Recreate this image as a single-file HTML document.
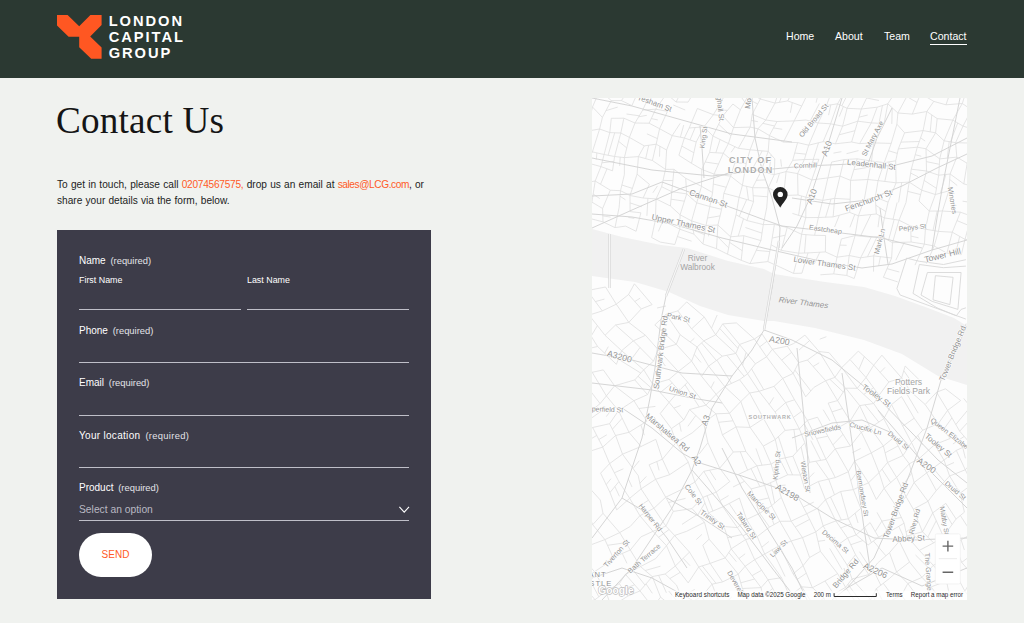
<!DOCTYPE html>
<html lang="en">
<head>
<meta charset="utf-8">
<title>Contact Us — London Capital Group</title>
<style>
*{box-sizing:border-box;margin:0;padding:0}
html,body{width:1024px;height:623px;overflow:hidden}
body{background:#f0f2ef;font-family:"Liberation Sans",sans-serif;color:#1f1f1f;position:relative}
.hdr{position:absolute;left:0;top:0;width:1024px;height:77.8px;background:#2b3932}
.logo{position:absolute;left:56px;top:14px;width:46px;height:46px}
.brand{position:absolute;left:108.7px;top:14px;color:#fff;font-weight:700;font-size:14.7px;line-height:15.9px;letter-spacing:1.95px;white-space:nowrap}
.nav a{position:absolute;top:29px;color:#fff;font-size:10.6px;line-height:14px;text-decoration:none;white-space:nowrap}
.nav a.on{border-bottom:1px solid #fff;padding-bottom:1px}
h1{position:absolute;left:56px;top:98px;font-family:"Liberation Serif",serif;font-weight:400;font-size:37.2px;line-height:46px;color:#151515;letter-spacing:0.2px;white-space:nowrap}
.intro{position:absolute;left:57px;top:177px;width:400px;font-size:10.15px;line-height:15.5px;color:#222;white-space:nowrap;word-spacing:0.42px}
.intro a{color:#ff5a26;text-decoration:none}
.form{position:absolute;left:57px;top:230px;width:374.3px;height:369px;background:#3d3c49;color:#fff}
.form .l{position:absolute;left:22px;font-size:10px;line-height:14px;white-space:nowrap}
.form .l span{font-size:9.4px;color:#e3e3e8;margin-left:2px}
.form .s{position:absolute;font-size:8.9px;line-height:14px;white-space:nowrap}
.form .u{position:absolute;left:22px;width:330px;height:1px;background:#bfbfc8}
.form .ph{position:absolute;left:22px;top:273px;font-size:10.3px;line-height:14px;color:#b9b9c3}
.btn{position:absolute;left:22px;top:303.4px;width:73px;height:43.6px;border-radius:22px;background:#fff;color:#ff5a26;font-family:"Liberation Sans",sans-serif;font-size:10px;line-height:43px;text-align:center}
.map{position:absolute;left:591.5px;top:97.6px;width:375px;height:502px;background:#fff;overflow:hidden}
.map svg{display:block}
</style>
</head>
<body>
<div class="hdr">
<svg class="logo" viewBox="56 14 46 46"><polygon fill="#ff5722" points="57,15 67.6,15 79.2,26.2 90.4,15 101.6,15 101.6,25 90.2,36.4 101.6,47.4 101.6,58.8 91.2,58.8 79.2,47.2 79.2,36.8 68.6,36.8 57,25.4"/></svg>
<div class="brand">LONDON<br>CAPITAL<br>GROUP</div>
<div class="nav">
<a style="left:786px">Home</a>
<a style="left:835px">About</a>
<a style="left:884px">Team</a>
<a class="on" style="left:930px">Contact</a>
</div>
</div>
<h1>Contact Us</h1>
<p class="intro">To get in touch, please call <a style="letter-spacing:-0.25px">02074567575,</a> drop us an email at <a style="letter-spacing:-0.42px">sales@LCG.com</a>, or<br>share your details via the form, below.</p>
<div class="form">
<div class="l" style="top:24px">Name <span>(required)</span></div>
<div class="s" style="left:22px;top:43px">First Name</div>
<div class="s" style="left:190px;top:43px">Last Name</div>
<div class="u" style="top:79px;width:162px"></div>
<div class="u" style="top:79px;left:190px;width:162px"></div>
<div class="l" style="top:94px">Phone <span>(required)</span></div>
<div class="u" style="top:132px"></div>
<div class="l" style="top:146px">Email <span>(required)</span></div>
<div class="u" style="top:185px"></div>
<div class="l" style="top:199px;letter-spacing:0.3px">Your location <span>(required)</span></div>
<div class="u" style="top:237px"></div>
<div class="l" style="top:251px">Product <span>(required)</span></div>
<div class="ph">Select an option</div>
<svg style="position:absolute;left:341px;top:276px" width="12" height="8" viewBox="0 0 12 8"><path d="M1.4 0.9 L6.2 6.2 L11 0.9" fill="none" stroke="#fff" stroke-width="1.1"/></svg>
<div class="u" style="top:290px"></div>
<div class="btn">SEND</div>
</div>
<div class="map">
<svg width="375" height="502" viewBox="0 0 375 502" font-family="Liberation Sans, sans-serif">
<rect width="375" height="502" fill="#fdfdfd"/>
<polygon points="0,131 30,139 69,147 95,150 136,163 172,171 182,176 233,184 272,189 303,198 336,210 362,220 375,228 375,287 346,278 310,256 272,242 223,230 182,223 172,223 136,217 108,208 77,194 43,184 0,178" fill="#f1f1f1"/>
<path d="M7.6 -7.6L19.3 2.6M7.6 -7.6L0.5 9.0M0.5 9.0L10.4 19.4M0.5 9.0L-5.8 33.3M-5.8 33.3L7.6 31.0M-14.8 45.4L0.4 53.9M19.3 2.6L29.4 2.6M19.3 2.6L10.4 19.4M14.1 12.6L25.7 9.1M10.4 19.4L7.6 31.0M7.6 31.0L17.8 34.6M7.6 31.0L0.4 53.9M0.4 53.9L12.1 56.5M0.4 53.9L-6.0 64.5M4.9 54.9L4.3 61.6M-6.0 64.5L8.9 68.6M-7.8 84.9L3.2 83.0M-1.9 83.9L-2.5 94.0M42.0 -15.6L29.4 2.6M45.1 -12.5L39.1 -2.9M29.4 2.6L39.9 7.6M19.3 20.3L31.9 20.2M19.3 20.3L17.8 34.6M17.8 34.6L28.8 35.0M17.8 34.6L12.1 56.5M22.7 34.8L16.1 57.2M12.1 56.5L22.6 58.5M12.1 56.5L8.9 68.6M9.9 64.8L21.9 63.4M8.9 68.6L20.5 72.8M8.9 68.6L3.2 83.0M15.0 70.8L8.5 86.3M3.2 83.0L18.3 92.2M3.2 83.0L-0.1 104.1M1.2 96.1L7.8 100.6M-0.1 104.1L10.6 110.5M-0.1 104.1L-4.0 120.0M-4.0 120.0L11.0 123.9M47.7 -9.9L39.9 7.6M34.5 16.0L47.3 17.8M31.9 20.2L43.0 25.0M31.9 20.2L28.8 35.0M28.8 35.0L37.4 39.4M28.8 35.0L22.6 58.5M26.6 43.3L34.8 50.0M22.6 58.5L32.4 59.6M22.6 58.5L20.5 72.8M28.2 59.1L27.6 67.8M18.3 92.2L28.5 92.7M18.3 92.2L10.6 110.5M10.6 110.5L11.0 123.9M10.8 117.9L18.6 119.1M11.0 123.9L23.0 129.6M59.5 -7.3L50.7 12.1M50.7 12.1L63.7 11.2M50.7 12.1L43.0 25.0M46.7 18.8L54.8 17.3M43.0 25.0L57.1 25.2M43.0 25.0L37.4 39.4M37.4 39.4L52.3 47.9M37.4 39.4L32.4 59.6M32.4 59.6L46.4 58.6M32.4 59.6L32.4 76.5M32.4 76.5L28.5 92.7M29.9 87.0L40.4 90.4M28.5 92.7L38.0 97.5M28.5 92.7L27.1 109.5M28.0 98.2L33.5 101.8M27.1 109.5L23.0 129.6M23.0 129.6L33.6 128.1M77.9 -11.9L86.6 -1.2M74.5 -4.2L84.1 4.0M74.5 -4.2L63.7 11.2M63.7 11.2L75.5 13.3M63.7 11.2L57.1 25.2M59.3 20.6L65.8 21.9M57.1 25.2L67.6 30.7M54.9 35.8L65.4 40.6M52.3 47.9L64.2 46.2M52.3 47.9L46.4 58.6M56.7 47.3L53.7 60.6M46.4 58.6L60.4 62.5M46.4 58.6L45.1 76.2M45.1 76.2L57.4 86.3M45.1 76.2L38.0 97.5M38.0 97.5L51.1 100.0M38.0 97.5L38.1 113.6M38.0 104.9L49.8 108.8M38.1 113.6L48.9 114.8M36.3 119.4L42.3 120.4M33.6 128.1L44.1 133.3M91.2 -10.4L84.1 4.0M84.1 4.0L96.1 4.1M81.3 7.0L93.2 12.0M75.5 13.3L67.6 30.7M67.6 30.7L80.2 37.6M67.6 30.7L64.2 46.2M64.2 46.2L74.6 52.0M64.2 46.2L60.4 62.5M67.9 48.2L67.5 58.6M60.4 62.5L73.5 71.4M57.4 86.3L51.1 100.0M65.5 87.9L60.8 94.8M51.1 100.0L64.1 100.9M55.9 100.3L54.9 117.8M48.9 114.8L44.1 133.3M103.8 -8.9L96.1 4.1M88.2 25.3L80.2 37.6M91.7 27.1L88.4 39.2M80.2 37.6L92.4 40.0M80.2 37.6L74.6 52.0M74.6 52.0L73.5 71.4M73.5 71.4L82.0 71.3M73.5 71.4L69.6 88.7M71.0 82.4L80.9 82.6M69.6 88.7L79.8 93.7M69.6 88.7L64.1 100.9M64.1 100.9L78.4 108.0M64.1 100.9L63.4 122.0M63.4 122.0L76.0 125.1M63.4 122.0L59.6 139.5M70.5 123.7L66.4 133.4M59.6 139.5L68.3 144.1M117.6 -6.1L129.6 3.1M105.4 10.5L121.4 16.7M105.4 10.5L97.2 30.0M97.2 30.0L112.0 28.8M97.2 30.0L92.4 40.0M103.2 29.5L98.0 41.9M92.4 40.0L104.2 44.0M92.4 40.0L86.9 57.3M89.8 48.1L101.8 54.7M86.9 57.3L99.5 65.3M82.0 71.3L93.7 80.3M82.0 71.3L79.8 93.7M79.8 93.7L94.7 95.9M79.8 93.7L78.4 108.0M79.1 101.2L92.4 103.2M78.4 108.0L88.1 116.8M76.0 125.1L87.8 131.2M68.3 144.1L82.8 146.5M137.5 -12.7L129.6 3.1M132.8 -3.2L138.7 -1.7M129.6 3.1L121.4 16.7M124.5 11.6L135.5 12.4M121.4 16.7L130.8 17.8M121.4 16.7L112.0 28.8M112.0 28.8L120.9 38.0M112.0 28.8L104.2 44.0M104.2 44.0L99.5 65.3M99.5 65.3L109.8 71.4M93.7 80.3L109.5 88.3M93.7 80.3L94.7 95.9M94.7 95.9L104.7 104.8M94.7 95.9L88.1 116.8M88.1 116.8L99.6 122.9M88.1 116.8L87.8 131.2M87.8 131.2L101.9 136.1M87.8 131.2L82.8 146.5M85.4 138.5L99.6 143.2M145.8 -5.7L152.8 4.0M140.9 6.0L148.4 11.8M140.9 6.0L130.8 17.8M130.8 17.8L141.5 29.6M130.8 17.8L120.9 38.0M126.7 26.3L138.9 37.7M120.9 38.0L136.4 45.6M120.9 38.0L117.6 54.4M128.1 41.5L123.8 54.8M117.6 54.4L131.3 55.2M117.6 54.4L109.8 71.4M113.2 64.0L126.5 66.0M109.8 71.4L122.1 76.1M109.8 71.4L109.5 88.3M109.5 88.3L120.6 94.5M109.5 88.3L104.7 104.8M104.7 104.8L117.8 108.5M104.7 104.8L99.6 122.9M99.6 122.9L114.0 127.5M99.6 122.9L101.9 136.1M101.2 132.1L112.5 136.6M101.9 136.1L110.9 146.0M157.7 -4.9L168.3 1.0M157.7 -4.9L148.4 11.8M154.6 0.7L165.7 5.9M148.4 11.8L141.5 29.6M141.5 29.6L158.2 29.1M141.5 29.6L136.4 45.6M136.4 45.6L146.3 50.3M136.4 45.6L131.3 55.2M143.0 48.7L139.1 54.3M131.3 55.2L142.9 64.8M131.3 55.2L122.1 76.1M122.1 76.1L138.6 78.1M122.1 76.1L120.6 94.5M121.3 86.0L134.3 89.3M120.6 94.5L117.8 108.5M117.8 108.5L129.6 111.3M117.8 108.5L114.0 127.5M115.5 120.0L128.1 117.9M114.0 127.5L125.9 127.0M114.0 127.5L110.9 146.0M118.4 127.3L116.5 138.3M110.9 146.0L124.5 150.7M177.8 -15.6L168.3 1.0M168.3 1.0L183.0 5.1M168.3 1.0L160.2 16.3M160.2 16.3L173.8 22.0M160.2 16.3L158.2 29.1M159.2 22.4L165.9 23.7M158.2 29.1L166.0 30.8M158.2 29.1L146.3 50.3M146.3 50.3L158.1 51.8M142.9 64.8L154.2 65.4M142.9 64.8L138.6 78.1M138.6 78.1L150.4 87.4M138.6 78.1L131.9 95.3M131.9 95.3L147.1 99.3M131.9 95.3L129.6 111.3M129.6 111.3L125.9 127.0M125.9 127.0L138.6 138.8M125.9 127.0L124.5 150.7M125.2 138.3L136.7 149.9M124.5 150.7L135.5 156.2M188.7 -12.4L183.0 5.1M193.5 -12.0L187.4 4.3M183.0 5.1L195.7 2.9M183.0 5.1L173.8 22.0M173.8 22.0L185.0 23.5M173.8 22.0L166.0 30.8M170.8 25.3L182.5 28.0M166.0 30.8L177.4 37.5M166.0 30.8L158.1 51.8M158.1 51.8L176.2 53.4M158.1 51.8L154.2 65.4M170.2 52.9L161.2 69.4M154.2 65.4L150.4 87.4M150.4 87.4L160.6 89.7M150.4 87.4L147.1 99.3M154.6 88.3L156.5 102.0M147.1 99.3L161.6 103.5M147.1 99.3L144.0 116.8M154.7 101.5L147.2 118.5M144.0 116.8L154.9 122.5M144.0 116.8L138.6 138.8M151.5 120.7L146.2 138.2M138.6 138.8L151.8 137.7M138.6 138.8L135.5 156.2M137.6 144.4L150.2 152.7M135.5 156.2L149.2 162.3M202.9 -11.3L195.7 2.9M195.7 2.9L209.7 8.0M200.3 4.6L198.3 14.8M185.0 23.5L202.2 22.9M185.0 23.5L177.4 37.5M181.5 29.9L190.2 31.3M177.4 37.5L191.4 44.1M177.4 37.5L176.2 53.4M176.2 53.4L182.8 60.9M176.2 53.4L168.9 73.6M179.1 56.7L177.1 75.4M168.9 73.6L182.3 76.6M168.9 73.6L160.6 89.7M164.4 82.3L173.0 81.9M160.6 89.7L176.3 89.8M160.6 89.7L161.6 103.5M161.2 97.7L175.6 98.8M161.6 103.5L154.9 122.5M154.9 122.5L171.3 126.6M153.4 129.5L170.0 135.2M151.8 137.7L168.9 142.6M151.8 137.7L149.2 162.3M149.2 162.3L158.0 165.6M221.5 -16.3L209.7 8.0M209.7 8.0L202.2 22.9M202.2 22.9L213.9 22.0M202.2 22.9L191.4 44.1M191.4 44.1L205.6 44.6M182.8 60.9L182.3 76.6M188.7 61.3L189.5 68.6M182.3 76.6L194.1 73.6M182.3 76.6L176.3 89.8M187.5 75.3L184.6 84.9M176.3 89.8L191.6 97.5M176.3 89.8L174.7 109.8M174.7 109.8L171.3 126.6M171.3 126.6L182.4 126.4M171.3 126.6L168.9 142.6M168.9 142.6L158.0 165.6M164.3 152.3L177.7 153.6M158.0 165.6L175.8 163.6M227.5 -9.6L224.1 4.6M227.4 5.5L218.1 23.1M213.9 22.0L226.1 25.0M211.1 29.8L216.1 34.9M205.6 44.6L216.7 47.2M205.6 44.6L200.7 62.3M202.7 55.0L214.0 56.2M200.7 62.3L212.4 61.5M200.7 62.3L194.1 73.6M194.1 73.6L205.6 75.6M194.1 73.6L191.6 97.5M191.6 97.5L206.0 97.0M191.6 97.5L188.7 109.8M182.4 126.4L195.2 129.5M182.4 126.4L179.1 146.8M180.2 140.1L193.2 137.2M179.1 146.8L189.3 152.4M179.1 146.8L175.8 163.6M175.8 163.6L187.5 168.8M241.5 -11.9L234.5 7.5M234.5 7.5L245.6 5.8M234.5 7.5L226.1 25.0M238.8 6.9L236.6 17.1M226.1 25.0L238.6 25.8M226.1 25.0L216.7 47.2M216.7 47.2L231.1 43.7M216.7 47.2L212.4 61.5M226.5 44.8L221.2 61.4M212.4 61.5L226.9 61.3M212.4 61.5L205.6 75.6M221.5 61.4L217.8 71.4M205.6 75.6L219.8 81.9M205.6 75.6L206.0 97.0M206.0 97.0L213.9 99.2M209.5 98.0L206.6 117.3M200.4 115.4L213.8 119.6M195.2 129.5L209.6 136.3M195.2 129.5L189.3 152.4M189.3 152.4L206.7 155.2M187.5 168.8L201.5 175.4M255.4 -11.5L245.6 5.8M259.9 -12.2L249.8 7.8M245.6 5.8L255.1 10.3M245.6 5.8L238.6 25.8M251.4 8.5L247.2 18.6M238.6 25.8L250.6 28.2M238.6 25.8L231.1 43.7M231.1 43.7L243.4 45.8M226.9 61.3L219.8 81.9M219.8 81.9L235.9 79.9M219.8 81.9L213.9 99.2M213.9 99.2L230.7 102.4M213.9 99.2L213.8 119.6M213.8 119.6L226.4 119.5M213.8 119.6L209.6 136.3M209.6 136.3L222.6 137.3M209.6 136.3L206.7 155.2M214.0 136.7L212.5 155.0M206.7 155.2L216.0 154.9M206.7 155.2L201.5 175.4M201.5 175.4L209.9 175.2M269.0 -13.6L255.1 10.3M255.1 10.3L269.3 11.0M255.1 10.3L250.6 28.2M250.6 28.2L265.8 23.2M250.6 28.2L243.4 45.8M247.1 36.8L263.0 32.7M243.4 45.8L259.6 44.0M241.5 55.1L249.4 53.7M239.6 64.1L252.0 61.6M239.6 64.1L235.9 79.9M235.9 79.9L248.0 78.1M235.9 79.9L230.7 102.4M230.7 102.4L242.7 100.4M230.7 102.4L226.4 119.5M239.0 101.0L233.6 119.2M226.4 119.5L241.1 118.9M226.4 119.5L222.6 137.3M222.6 137.3L233.6 137.5M216.0 154.9L233.4 153.9M216.0 154.9L209.9 175.2M227.8 154.2L222.2 166.1M280.1 -11.3L269.3 11.0M274.7 -0.0L287.0 2.5M269.3 11.0L285.2 9.2M269.3 11.0L265.8 23.2M267.0 19.2L275.7 17.0M265.8 23.2L279.3 24.9M265.8 23.2L259.6 44.0M259.6 44.0L267.6 45.6M254.5 55.7L266.5 52.6M252.0 61.6L265.2 60.8M252.0 61.6L248.0 78.1M248.0 78.1L258.6 82.4M248.0 78.1L242.7 100.4M242.7 100.4L258.2 101.3M242.7 100.4L241.1 118.9M241.1 118.9L257.7 114.4M247.3 117.3L242.6 129.0M233.6 137.5L233.4 153.9M233.4 153.9L245.0 159.2M228.4 176.8L241.7 175.9M285.2 9.2L295.8 5.8M285.2 9.2L279.3 24.9M290.4 7.6L287.0 25.3M279.3 24.9L292.1 25.6M279.3 24.9L267.6 45.6M267.6 45.6L281.6 44.9M265.2 60.8L279.5 63.0M265.2 60.8L258.6 82.4M261.9 71.7L278.3 69.0M258.6 82.4L275.9 81.5M258.6 82.4L258.2 101.3M258.2 101.3L257.7 114.4M257.7 114.4L266.4 117.8M262.8 116.4L257.9 129.3M249.4 140.9L263.1 137.6M249.4 140.9L245.0 159.2M247.9 147.1L254.6 147.3M245.0 159.2L257.2 157.5M245.0 159.2L241.7 175.9M241.7 175.9L254.8 177.5M302.5 -4.6L295.8 5.8M295.8 5.8L305.9 15.0M295.8 5.8L292.1 25.6M300.2 9.8L299.8 26.0M292.1 25.6L281.6 44.9M281.6 44.9L299.2 45.4M281.6 44.9L279.5 63.0M279.5 63.0L292.2 64.7M279.5 63.0L275.9 81.5M275.9 81.5L286.1 82.6M275.9 81.5L272.2 102.0M272.2 102.0L283.3 99.1M272.2 102.0L266.4 117.8M266.4 117.8L284.3 116.0M266.4 117.8L263.1 137.6M278.9 116.6L268.5 138.2M263.1 137.6L279.1 139.2M263.1 137.6L257.2 157.5M257.2 157.5L268.6 159.8M257.2 157.5L254.8 177.5M254.8 177.5L262.2 180.5M318.7 -8.7L305.9 15.0M314.8 -1.5L325.0 4.5M305.9 15.0L320.3 16.1M305.9 15.0L304.9 26.2M304.9 26.2L312.6 34.8M304.9 26.2L299.2 45.4M299.2 45.4L292.2 64.7M296.5 52.7L305.3 55.4M292.2 64.7L303.7 62.8M292.2 64.7L286.1 82.6M297.2 63.9L292.8 83.4M286.1 82.6L304.1 84.8M286.1 82.6L283.3 99.1M283.3 99.1L296.1 104.2M283.3 99.1L284.3 116.0M283.8 107.3L293.9 113.6M284.3 116.0L292.4 119.9M287.5 117.6L286.0 129.2M279.1 139.2L289.0 138.4M279.1 139.2L268.6 159.8M285.1 138.7L275.5 158.8M268.6 159.8L281.7 157.9M268.6 159.8L262.2 180.5M328.7 -4.5L341.8 3.4M328.7 -4.5L320.3 16.1M320.3 16.1L334.8 13.5M312.6 34.8L331.1 32.6M312.6 34.8L306.3 50.9M308.9 44.1L327.3 43.5M306.3 50.9L325.3 49.2M306.3 50.9L303.7 62.8M303.7 62.8L304.1 84.8M304.1 84.8L317.2 84.1M304.1 84.8L296.1 104.2M309.7 84.5L306.6 104.4M296.1 104.2L292.4 119.9M305.2 104.4L301.0 121.3M292.4 119.9L307.0 122.2M292.4 119.9L289.0 138.4M302.2 121.4L296.5 142.5M289.0 138.4L300.5 144.7M289.0 138.4L281.7 157.9M281.7 157.9L299.6 160.0M281.7 157.9L281.5 173.6M288.4 158.7L286.6 168.0M341.8 3.4L354.0 6.8M341.8 3.4L334.8 13.5M334.8 13.5L345.2 20.6M334.8 13.5L331.1 32.6M339.8 16.9L338.2 33.9M331.1 32.6L343.6 34.8M331.1 32.6L325.3 49.2M328.6 39.8L333.2 43.1M325.3 49.2L334.0 50.8M325.3 49.2L319.3 71.2M323.3 56.7L329.3 58.3M319.3 71.2L334.5 73.0M319.3 71.2L317.2 84.1M318.7 75.1L326.1 78.8M317.2 84.1L329.7 92.2M317.2 84.1L314.0 104.5M315.8 93.4L328.6 96.6M314.0 104.5L307.0 122.2M307.0 122.2L318.7 128.0M307.0 122.2L300.5 144.7M300.5 144.7L319.1 144.0M300.5 144.7L299.6 160.0M312.3 144.3L303.8 162.2M299.6 160.0L291.4 179.3M295.1 170.7L307.3 174.0M291.4 179.3L305.7 183.9M359.5 -9.5L354.0 6.8M357.1 -2.3L365.1 -0.4M354.0 6.8L370.3 5.5M345.2 20.6L360.8 22.1M345.2 20.6L343.6 34.8M343.6 34.8L352.1 42.8M343.6 34.8L334.0 50.8M334.0 50.8L347.7 60.9M334.0 50.8L334.5 73.0M334.3 63.6L347.4 66.3M334.5 73.0L346.7 77.2M334.5 73.0L329.7 92.2M332.1 82.4L344.4 90.3M329.7 92.2L343.4 96.5M329.7 92.2L327.0 103.0M327.0 103.0L337.3 113.1M318.7 128.0L333.4 131.2M318.7 128.0L319.1 144.0M319.0 138.1L326.5 139.8M319.1 144.0L332.4 146.1M374.4 -7.7L370.3 5.5M372.6 -1.8L378.3 2.4M370.3 5.5L379.5 11.7M370.3 5.5L360.8 22.1M360.8 22.1L371.0 28.1M360.8 22.1L352.1 42.8M365.7 25.0L358.5 43.8M352.1 42.8L363.6 44.7M352.1 42.8L347.7 60.9M357.2 43.6L355.3 60.1M347.7 60.9L364.8 59.1M347.7 60.9L346.7 77.2M346.7 77.2L358.1 76.0M346.7 77.2L343.4 96.5M353.9 76.4L348.4 95.2M343.4 96.5L356.8 92.9M343.4 96.5L337.3 113.1M337.3 113.1L350.4 113.0M337.3 113.1L333.4 131.2M345.2 113.0L341.0 132.5M333.4 131.2L346.4 133.4M333.4 131.2L332.4 146.1M332.4 146.1L342.2 148.0M332.4 146.1L323.0 167.1M379.5 11.7L371.0 28.1M371.0 28.1L385.9 32.7M371.0 28.1L363.6 44.7M363.6 44.7L379.9 45.1M363.6 44.7L364.8 59.1M364.8 59.1L375.2 65.3M364.8 59.1L358.1 76.0M358.1 76.0L371.8 85.9M358.1 76.0L356.8 92.9M357.7 81.5L365.2 87.5M356.8 92.9L350.4 113.0M350.4 113.0L368.4 114.2M350.4 113.0L346.4 133.4M346.4 133.4L360.3 134.2M346.4 133.4L342.2 148.0M342.2 148.0L354.9 155.2M342.2 148.0L334.5 165.5M379.9 45.1L375.2 65.3M375.2 65.3L387.0 66.8M375.2 65.3L371.8 85.9M371.8 85.9L387.7 90.1M370.6 103.2L381.9 104.8M368.4 114.2L379.3 118.1M368.4 114.2L360.3 134.2M365.0 122.6L376.8 127.5M360.3 134.2L373.0 141.4M360.3 134.2L354.9 155.2M367.7 138.4L363.4 156.1M354.9 155.2L369.3 156.7M379.3 118.1L373.0 141.4M373.0 141.4L384.8 141.5M373.0 141.4L369.3 156.7M379.5 141.5L375.5 157.1M-14.3 506.5L3.0 501.7M-11.7 484.4L2.5 473.7M-11.7 484.4L3.0 501.7M-3.9 478.5L6.8 498.8M3.0 501.7L13.9 493.4M3.0 501.7L9.8 511.0M-13.0 455.6L-1.0 446.8M-13.0 455.6L2.5 473.7M2.5 473.7L12.8 466.8M2.5 473.7L13.9 493.4M13.9 493.4L27.3 485.7M13.9 493.4L19.1 508.8M19.1 508.8L36.0 498.0M-8.1 434.8L-1.0 446.8M-1.0 446.8L12.9 441.6M12.8 466.8L21.0 459.4M27.3 485.7L33.4 476.3M27.3 485.7L36.0 498.0M31.2 491.2L42.7 486.8M36.0 498.0L48.0 492.9M-6.4 410.2L0.7 426.7M0.7 426.7L11.0 415.3M0.7 426.7L12.9 441.6M12.9 441.6L27.7 434.6M12.9 441.6L21.0 459.4M15.5 447.3L33.8 444.7M21.0 459.4L38.3 452.0M30.3 455.5L35.0 465.4M33.4 476.3L48.5 468.6M33.4 476.3L48.0 492.9M41.2 472.3L53.0 487.1M48.0 492.9L60.3 478.6M48.0 492.9L60.6 509.0M54.0 485.9L60.3 495.3M60.6 509.0L68.6 499.2M-13.8 360.5L-2.6 353.4M-10.7 381.0L8.3 402.0M8.3 402.0L11.0 415.3M11.0 415.3L27.7 434.6M27.7 434.6L38.3 428.4M27.7 434.6L38.3 452.0M38.3 452.0L48.9 438.9M38.3 452.0L48.5 468.6M48.5 468.6L63.7 460.6M48.5 468.6L60.3 478.6M53.2 472.5L68.5 468.2M60.3 478.6L73.2 476.0M60.3 478.6L68.6 499.2M66.6 477.3L74.4 494.8M68.6 499.2L81.4 509.6M76.7 493.0L89.5 508.5M-11.3 341.3L0.7 329.5M-8.5 345.3L4.8 337.4M-2.6 353.4L10.7 349.1M8.6 375.2L17.6 365.6M8.6 375.2L18.0 394.5M14.2 386.6L19.0 380.7M18.0 394.5L26.9 383.6M18.0 394.5L24.7 411.9M22.9 388.6L27.4 398.3M24.7 411.9L37.7 400.3M38.3 428.4L47.9 417.7M48.9 438.9L61.0 433.3M63.7 460.6L74.5 447.7M73.2 476.0L83.3 468.0M73.2 476.0L84.5 487.1M77.9 480.6L88.1 474.4M84.5 487.1L93.1 507.9M89.4 499.1L102.7 491.4M93.1 507.9L109.7 498.4M-7.2 318.0L8.1 305.6M-4.1 322.6L11.1 311.9M0.7 329.5L17.6 325.7M0.7 329.5L10.7 349.1M6.8 341.5L14.8 336.8M10.7 349.1L23.6 337.5M10.7 349.1L17.6 365.6M17.6 365.6L30.5 356.2M17.6 365.6L26.9 383.6M22.3 374.8L31.4 370.8M26.9 383.6L37.7 400.3M36.2 380.7L40.0 389.0M37.7 400.3L49.1 390.9M37.7 400.3L47.9 417.7M43.7 410.5L56.5 402.2M47.9 417.7L61.9 410.3M47.9 417.7L61.0 433.3M61.0 433.3L73.9 428.1M61.0 433.3L74.5 447.7M66.6 439.3L77.1 431.5M74.5 447.7L82.6 437.5M74.5 447.7L83.3 468.0M83.3 468.0L97.5 454.1M83.3 468.0L96.2 484.9M91.2 460.3L98.0 467.7M96.2 484.9L106.7 469.0M109.7 498.4L120.0 486.2M109.7 498.4L118.0 512.1M-9.3 283.0L0.2 274.3M-9.3 283.0L8.1 305.6M8.1 305.6L14.4 297.9M14.3 318.6L18.8 312.6M17.6 325.7L26.5 312.7M17.6 325.7L23.6 337.5M20.4 331.2L30.2 320.2M23.6 337.5L37.0 334.3M23.6 337.5L30.5 356.2M30.5 356.2L49.0 348.5M30.5 356.2L46.2 377.6M41.0 370.5L47.3 362.7M46.2 377.6L49.1 390.9M47.9 385.2L54.4 378.4M49.1 390.9L63.6 381.3M49.1 390.9L61.9 410.3M61.9 410.3L73.7 399.2M61.9 410.3L73.9 428.1M73.9 428.1L81.3 413.4M73.9 428.1L82.6 437.5M82.6 437.5L94.6 433.3M82.6 437.5L97.5 454.1M97.5 454.1L106.7 469.0M106.7 469.0L118.1 465.4M106.7 469.0L120.0 486.2M110.2 467.8L124.0 485.3M120.0 486.2L130.6 483.9M120.0 486.2L129.1 509.3M129.1 509.3L139.7 499.1M-14.6 262.8L0.2 274.3M0.2 274.3L11.3 271.9M0.2 274.3L14.4 297.9M14.4 297.9L22.6 287.8M14.4 297.9L26.5 312.7M26.5 312.7L41.9 302.7M26.5 312.7L37.0 334.3M37.0 334.3L54.9 323.2M37.0 334.3L49.0 348.5M48.9 327.0L52.3 337.2M49.0 348.5L63.8 341.3M57.1 366.8L70.4 361.2M57.1 366.8L63.6 381.3M64.8 363.6L67.1 372.3M63.6 381.3L77.6 376.7M63.6 381.3L73.7 399.2M73.7 399.2L88.4 392.1M73.7 399.2L81.3 413.4M76.6 404.5L93.5 400.4M81.3 413.4L100.0 410.6M90.0 426.4L105.3 416.4M94.6 433.3L112.5 424.3M104.3 441.6L109.9 436.4M110.8 447.2L117.1 441.2M110.8 447.2L118.1 465.4M118.1 465.4L133.2 459.9M118.1 465.4L130.6 483.9M130.6 483.9L146.3 476.2M140.8 478.9L146.2 493.9M142.4 504.1L151.7 505.7M-4.5 250.8L5.6 248.5M11.3 271.9L22.6 287.8M22.6 287.8L42.8 281.9M22.6 287.8L41.9 302.7M41.9 302.7L55.5 296.6M41.9 302.7L54.9 323.2M46.9 310.5L63.4 308.4M62.3 319.0L70.0 337.1M63.8 341.3L70.4 361.2M70.4 361.2L84.1 344.5M70.4 361.2L77.6 376.7M77.6 376.7L96.3 364.2M88.4 392.1L102.9 384.1M100.0 410.6L110.9 399.4M100.0 410.6L112.5 424.3M105.8 417.0L112.9 404.8M112.5 424.3L117.1 441.2M117.1 441.2L133.2 459.9M133.2 459.9L139.2 450.9M133.2 459.9L146.3 476.2M136.8 454.5L144.4 463.7M146.3 476.2L153.1 468.3M146.3 476.2L150.4 490.5M148.8 484.8L162.6 481.0M150.4 490.5L169.1 489.6M150.4 490.5L163.6 515.0M163.6 515.0L171.8 504.1M-8.3 226.3L-2.9 217.1M-8.3 226.3L5.6 248.5M-0.9 238.1L5.4 227.7M5.6 248.5L24.4 266.3M12.7 255.2L16.3 248.6M24.4 266.3L29.6 252.7M26.4 261.2L48.8 275.1M42.8 281.9L51.7 271.8M42.8 281.9L55.5 296.6M46.0 278.3L59.0 289.7M55.5 296.6L60.7 286.1M68.2 315.6L77.1 304.4M68.2 315.6L79.4 330.6M79.4 330.6L91.8 322.0M79.4 330.6L84.1 344.5M87.5 325.0L89.2 333.6M84.1 344.5L100.2 334.9M84.1 344.5L96.3 364.2M96.3 364.2L102.9 384.1M102.9 384.1L111.8 373.3M102.9 384.1L110.9 399.4M110.9 399.4L124.2 394.1M110.9 399.4L116.6 414.8M115.1 397.8L120.9 413.0M116.6 414.8L130.9 408.8M116.6 414.8L132.0 428.5M132.0 428.5L145.4 429.6M132.0 428.5L139.2 450.9M135.6 439.7L150.1 436.5M139.2 450.9L153.5 441.6M139.2 450.9L153.1 468.3M146.9 460.6L153.1 455.8M153.1 468.3L162.7 461.7M153.1 468.3L169.1 489.6M160.1 477.6L169.7 472.2M169.1 489.6L176.0 481.8M169.1 489.6L171.8 504.1M170.9 499.5L180.6 490.4M171.8 504.1L187.8 503.5M171.8 504.1L183.0 521.1M-17.2 203.8L-2.9 217.1M-2.9 217.1L10.3 212.9M-2.9 217.1L13.0 237.3M13.0 237.3L23.5 227.0M13.0 237.3L29.6 252.7M29.6 252.7L41.4 242.8M29.6 252.7L51.7 271.8M39.4 261.2L48.0 249.5M51.7 271.8L61.5 263.2M51.7 271.8L60.7 286.1M60.7 286.1L77.1 281.4M60.7 286.1L77.1 304.4M68.3 294.5L80.2 284.9M77.1 304.4L87.1 292.7M77.1 304.4L91.8 322.0M81.9 310.1L88.6 307.5M91.8 322.0L97.6 311.5M95.9 328.3L103.8 317.4M100.2 334.9L111.6 324.9M107.3 355.9L115.9 344.7M111.8 373.3L127.7 370.2M111.8 373.3L124.2 394.1M117.5 372.2L123.9 382.1M124.2 394.1L137.8 383.5M124.2 394.1L130.9 408.8M128.1 402.6L136.6 397.6M130.9 408.8L147.4 400.1M130.9 408.8L145.4 429.6M137.2 405.5L144.4 416.4M145.4 429.6L154.6 421.5M145.4 429.6L153.5 441.6M151.0 437.8L156.7 434.9M153.5 441.6L165.2 438.6M153.5 441.6L162.7 461.7M162.7 461.7L172.7 456.1M162.7 461.7L176.0 481.8M176.0 481.8L189.5 479.7M176.0 481.8L187.8 503.5M187.8 503.5L197.7 498.1M187.8 503.5L196.8 517.4M-4.8 192.6L13.5 189.0M-4.8 192.6L10.3 212.9M3.3 203.6L12.4 201.1M10.3 212.9L24.3 206.2M23.5 227.0L36.8 224.4M23.5 227.0L41.4 242.8M41.4 242.8L53.5 237.3M41.4 242.8L61.5 263.2M61.5 263.2L66.2 251.7M64.6 255.5L73.4 268.1M77.1 281.4L86.3 273.5M77.1 281.4L87.1 292.7M87.1 292.7L95.7 284.2M93.0 286.8L107.2 308.9M97.6 311.5L113.9 307.2M97.6 311.5L111.6 324.9M111.6 324.9L123.9 315.8M111.6 324.9L115.9 344.7M115.9 344.7L127.7 370.2M127.7 370.2L141.3 354.0M127.7 370.2L137.8 383.5M141.0 389.0L152.5 383.3M147.4 400.1L154.6 421.5M154.6 421.5L167.7 415.3M154.6 421.5L165.2 438.6M165.2 438.6L177.5 429.1M165.2 438.6L172.7 456.1M169.8 449.2L176.9 443.5M172.7 456.1L187.4 447.7M172.7 456.1L189.5 479.7M180.2 451.8L193.1 478.5M189.5 479.7L197.7 498.1M197.7 498.1L209.8 488.8M197.7 498.1L209.9 511.7M201.8 494.9L209.7 503.0M13.5 189.0L24.3 206.2M24.3 206.2L36.6 196.5M24.3 206.2L36.8 224.4M36.8 224.4L49.3 210.9M36.8 224.4L53.5 237.3M53.5 237.3L66.2 251.7M66.2 251.7L84.3 246.3M66.2 251.7L86.3 273.5M86.3 273.5L99.6 263.1M86.3 273.5L95.7 284.2M95.7 284.2L113.9 307.2M113.9 307.2L124.1 296.3M113.9 307.2L123.9 315.8M123.9 315.8L137.5 315.3M123.9 315.8L130.4 336.9M126.5 324.3L141.0 322.8M130.4 336.9L144.0 328.9M130.4 336.9L141.3 354.0M141.3 354.0L153.9 353.5M148.2 353.7L155.6 372.1M146.5 376.4L164.9 367.8M146.5 376.4L159.2 390.9M159.0 370.6L167.9 388.6M159.2 390.9L172.6 387.4M159.2 390.9L167.7 415.3M163.4 403.0L176.9 399.9M167.7 415.3L179.6 407.7M167.7 415.3L177.5 429.1M175.9 410.1L182.0 426.5M177.5 429.1L187.8 423.3M187.4 447.7L199.2 443.0M187.4 447.7L201.1 475.9M201.1 475.9L211.1 467.6M201.1 475.9L209.8 488.8M205.0 481.5L214.3 475.2M209.8 488.8L220.4 489.7M209.8 488.8L221.7 507.7M221.7 507.7L232.0 500.0M36.6 196.5L42.4 185.8M36.6 196.5L49.3 210.9M42.8 203.5L48.1 200.2M49.3 210.9L60.1 206.6M62.8 226.9L74.1 216.3M62.8 226.9L84.3 246.3M84.3 246.3L88.1 236.7M84.3 246.3L99.6 263.1M99.6 263.1L105.1 249.0M99.6 263.1L109.6 278.3M102.2 256.3L109.0 264.5M109.6 278.3L116.6 268.1M109.6 278.3L124.1 296.3M119.0 289.9L122.2 283.6M124.1 296.3L132.7 288.5M124.1 296.3L137.5 315.3M137.5 315.3L148.8 303.5M137.5 315.3L144.0 328.9M144.0 328.9L158.1 329.4M144.0 328.9L153.9 353.5M153.9 353.5L164.9 367.8M163.9 350.4L170.0 367.2M164.9 367.8L179.1 366.1M164.9 367.8L172.6 387.4M172.6 387.4L183.9 382.3M172.6 387.4L179.6 407.7M178.5 384.7L182.7 405.1M179.6 407.7L189.3 399.4M179.6 407.7L187.8 423.3M187.8 423.3L199.2 423.2M187.8 423.3L199.2 443.0M199.2 443.0L210.5 439.6M199.2 443.0L211.1 467.6M211.1 467.6L217.6 459.5M211.1 467.6L220.4 489.7M220.4 489.7L233.0 483.0M220.4 489.7L232.0 500.0M232.0 500.0L237.6 519.8M42.4 185.8L60.1 206.6M65.0 210.0L74.0 208.0M74.1 216.3L85.8 212.9M74.1 216.3L88.1 236.7M88.1 236.7L105.1 249.0M98.2 244.0L102.4 240.2M105.1 249.0L111.8 242.9M105.1 249.0L116.6 268.1M109.6 244.9L124.4 262.5M116.6 268.1L130.3 258.2M116.6 268.1L132.7 288.5M124.9 262.1L139.4 285.4M132.7 288.5L147.5 281.7M132.7 288.5L148.8 303.5M148.8 303.5L157.6 295.0M148.8 303.5L158.1 329.4M158.1 329.4L171.6 320.5M158.1 329.4L171.3 348.1M171.3 348.1L183.3 341.5M171.3 348.1L179.1 366.1M179.1 366.1L187.7 361.0M179.1 366.1L183.9 382.3M183.9 382.3L195.7 376.8M183.9 382.3L189.3 399.4M185.7 387.7L193.6 387.1M189.3 399.4L199.2 423.2M199.2 423.2L214.8 415.7M199.2 423.2L210.5 439.6M203.2 429.0L217.6 421.4M210.5 439.6L223.8 433.9M210.5 439.6L217.6 459.5M217.6 459.5L228.4 453.3M233.0 483.0L245.6 475.6M233.0 483.0L241.8 496.2M241.8 496.2L253.6 489.3M241.8 496.2L249.8 513.5M249.8 513.5L264.1 504.9M85.8 212.9L94.7 203.9M85.8 212.9L99.6 230.9M99.6 230.9L112.3 219.0M99.6 230.9L111.8 242.9M111.8 242.9L123.7 236.8M111.8 242.9L130.3 258.2M130.3 258.2L143.9 255.4M134.8 257.3L152.2 278.3M147.5 281.7L155.6 275.8M147.5 281.7L157.6 295.0M157.6 295.0L167.1 293.3M157.6 295.0L171.6 320.5M171.6 320.5L183.3 341.5M183.3 341.5L193.1 332.4M183.3 341.5L187.7 361.0M186.4 338.7L193.4 359.8M187.7 361.0L200.9 358.2M187.7 361.0L195.7 376.8M193.2 359.8L200.5 376.9M195.7 376.8L208.5 377.0M204.4 396.0L214.8 415.7M211.3 409.0L221.8 404.1M214.8 415.7L225.8 410.1M214.8 415.7L223.8 433.9M223.8 433.9L231.2 427.9M223.8 433.9L228.4 453.3M226.0 443.4L233.1 442.3M228.4 453.3L245.6 475.6M237.7 450.4L250.1 471.6M245.6 475.6L253.6 489.3M252.0 470.0L254.3 478.8M253.6 489.3L260.0 481.0M253.6 489.3L264.1 504.9M255.9 486.3L269.0 503.8M264.1 504.9L278.6 501.7M264.1 504.9L272.2 520.9M272.2 503.1L277.7 517.0M94.7 203.9L112.3 219.0M112.3 219.0L123.7 236.8M119.5 230.2L125.2 217.0M123.7 236.8L130.7 225.9M123.7 236.8L143.9 255.4M127.7 230.4L145.9 250.3M143.9 255.4L147.5 246.5M143.9 255.4L155.6 275.8M150.6 267.1L154.1 254.6M155.6 275.8L163.4 265.8M155.6 275.8L167.1 293.3M159.5 270.8L171.8 291.7M167.1 293.3L182.0 288.4M167.1 293.3L183.1 314.0M177.2 306.5L181.8 299.3M183.1 314.0L193.6 304.6M183.1 314.0L193.1 332.4M193.1 332.4L207.4 330.9M201.9 331.5L205.0 353.5M200.9 358.2L212.8 344.8M200.9 358.2L208.5 377.0M209.1 349.0L213.8 369.6M208.5 377.0L217.6 364.3M208.5 377.0L212.6 390.7M211.2 385.9L222.2 374.5M212.6 390.7L226.3 383.5M225.8 410.1L233.5 401.7M225.8 410.1L231.2 427.9M231.2 427.9L243.8 422.9M231.2 427.9L243.3 448.7M243.3 448.7L255.6 440.0M243.3 448.7L255.2 467.2M255.2 467.2L263.5 456.7M255.2 467.2L260.0 481.0M260.0 481.0L276.8 476.6M260.0 481.0L278.6 501.7M278.6 501.7L284.3 490.7M278.6 501.7L282.2 513.9M280.8 497.4L286.9 510.4M130.7 225.9L144.4 224.9M130.7 225.9L147.5 246.5M147.5 246.5L162.4 241.0M147.5 246.5L163.4 265.8M163.4 265.8L174.6 258.8M182.0 288.4L190.7 280.4M182.0 288.4L193.6 304.6M193.6 304.6L202.5 301.8M193.6 304.6L207.4 330.9M201.4 319.4L209.7 313.3M207.4 330.9L215.3 322.3M207.4 330.9L212.8 344.8M212.1 325.8L221.0 341.8M212.8 344.8L217.6 364.3M218.8 342.6L228.7 362.3M217.6 364.3L234.0 361.4M223.8 363.2L236.5 381.2M226.3 383.5L243.3 379.6M226.3 383.5L233.5 401.7M236.7 381.2L242.5 396.8M233.5 401.7L248.6 393.5M233.5 401.7L243.8 422.9M238.5 399.0L249.4 422.0M243.8 422.9L256.4 420.8M243.8 422.9L255.6 440.0M248.7 430.0L258.9 426.0M255.6 440.0L264.1 436.9M255.6 440.0L263.5 456.7M258.8 446.7L270.9 442.5M263.5 456.7L276.8 476.6M267.5 453.7L279.9 472.6M276.8 476.6L285.7 464.9M280.9 471.2L288.8 487.2M284.3 490.7L297.2 480.7M284.3 490.7L292.4 506.2M291.3 485.3L297.6 493.8M292.4 506.2L309.6 497.2M144.4 224.9L162.4 241.0M162.4 241.0L170.0 235.9M162.4 241.0L174.6 258.8M167.8 248.8L174.9 243.3M174.6 258.8L180.3 251.3M174.6 258.8L190.7 280.4M190.7 280.4L201.2 275.4M190.7 280.4L202.5 301.8M202.5 301.8L215.3 322.3M215.3 322.3L225.5 319.2M215.3 322.3L224.5 340.5M224.5 340.5L235.8 338.2M224.5 340.5L234.0 361.4M234.0 361.4L243.2 350.8M234.0 361.4L243.3 379.6M243.3 379.6L256.3 373.8M248.6 393.5L261.3 391.6M248.6 393.5L256.4 420.8M256.4 420.8L268.8 410.4M256.4 420.8L264.1 436.9M263.1 415.2L266.1 425.0M264.1 436.9L278.1 424.6M264.1 436.9L276.2 446.9M272.7 429.3L279.4 444.5M276.2 446.9L286.6 439.2M281.4 443.1L293.9 457.8M285.7 464.9L297.5 454.7M297.2 480.7L304.6 474.0M309.6 497.2L315.8 485.5M309.6 497.2L319.9 511.8M319.9 511.8L329.8 504.3M170.0 235.9L180.3 251.3M180.3 251.3L195.3 248.2M180.3 251.3L201.2 275.4M189.7 262.1L199.6 254.4M201.2 275.4L206.7 264.6M201.2 275.4L213.7 298.8M202.9 272.1L218.8 292.9M213.7 298.8L221.9 289.4M225.5 319.2L235.8 338.2M231.2 311.7L237.9 322.9M235.8 338.2L243.2 350.8M240.9 346.9L251.0 336.3M243.2 350.8L258.4 348.1M243.2 350.8L256.3 373.8M256.3 373.8L262.6 363.1M256.3 373.8L261.3 391.6M258.8 382.7L267.6 370.9M261.3 391.6L276.5 384.8M261.3 391.6L268.8 410.4M278.1 424.6L286.6 439.2M283.3 433.5L289.8 423.2M286.6 439.2L296.2 434.6M297.5 454.7L307.3 443.2M297.5 454.7L304.6 474.0M304.6 474.0L317.5 464.0M304.6 474.0L315.8 485.5M315.8 485.5L330.0 479.4M315.8 485.5L329.8 504.3M329.8 504.3L339.1 488.9M329.8 504.3L336.3 516.2M336.1 493.9L341.7 502.7M195.3 248.2L201.6 245.6M195.3 248.2L206.7 264.6M206.7 264.6L215.4 262.0M221.9 289.4L233.6 282.7M236.2 305.1L245.6 302.6M236.2 305.1L246.7 329.4M240.0 313.9L250.5 310.5M246.7 329.4L258.2 322.9M246.7 329.4L258.4 348.1M258.4 348.1L269.3 334.2M260.3 354.8L268.7 350.5M262.6 363.1L279.3 354.9M262.6 363.1L276.5 384.8M276.5 384.8L287.1 374.6M276.5 384.8L284.3 401.5M284.3 401.5L292.1 390.3M285.0 414.4L296.2 434.6M289.8 423.1L309.4 419.5M296.2 434.6L312.1 425.2M306.8 428.4L312.1 439.9M307.3 443.2L314.9 438.0M307.3 443.2L317.5 464.0M317.5 464.0L330.0 479.4M323.5 457.0L337.8 471.1M330.0 479.4L341.3 467.3M330.0 479.4L339.1 488.9M339.1 488.9L354.5 483.1M339.1 488.9L352.0 506.2M352.0 506.2L357.5 497.4M201.6 245.6L212.9 237.1M207.0 252.1L217.6 242.5M215.4 262.0L227.1 253.5M215.4 262.0L233.6 282.7M221.1 268.5L227.2 264.8M233.6 282.7L242.9 279.4M233.6 282.7L245.6 302.6M237.8 281.2L251.3 294.0M245.6 302.6L253.8 290.2M245.6 302.6L258.2 322.9M258.2 322.9L267.7 307.6M258.2 322.9L269.3 334.2M269.3 334.2L278.3 329.8M269.3 334.2L279.3 354.9M279.3 354.9L291.4 348.0M279.3 354.9L287.1 374.6M287.1 374.6L295.5 364.5M287.1 374.6L292.1 390.3M290.0 371.2L298.7 384.6M292.1 390.3L304.6 379.4M292.1 390.3L304.0 408.1M304.0 408.1L314.1 398.7M304.0 408.1L312.1 425.2M312.1 425.2L314.9 438.0M314.0 434.0L326.7 424.5M314.9 438.0L330.5 433.8M314.9 438.0L327.3 452.4M320.8 436.4L328.3 443.1M327.3 452.4L341.6 444.9M327.3 452.4L341.3 467.3M341.3 467.3L354.2 460.8M341.3 467.3L354.5 483.1M349.3 463.3L359.7 480.0M354.5 483.1L364.4 477.2M354.5 483.1L357.5 497.4M357.5 497.4L372.9 493.2M357.5 497.4L373.7 516.3M212.9 237.1L227.1 253.5M227.1 253.5L237.1 254.7M227.1 253.5L242.9 279.4M242.9 279.4L249.7 269.6M242.9 279.4L253.8 290.2M253.8 290.2L265.2 290.3M253.8 290.2L267.7 307.6M267.7 307.6L281.7 305.5M267.7 307.6L278.3 329.8M273.0 306.8L286.8 324.1M278.3 329.8L291.8 320.7M278.3 329.8L291.4 348.0M291.4 348.0L301.8 339.6M291.4 348.0L295.5 364.5M293.1 354.9L306.1 347.9M295.5 364.5L311.0 357.5M295.5 364.5L304.6 379.4M304.6 379.4L317.3 365.8M304.6 379.4L314.1 398.7M309.4 389.2L319.7 375.2M314.1 398.7L322.1 384.5M314.1 398.7L321.3 411.2M321.3 411.2L336.0 403.3M321.3 411.2L330.5 433.8M330.5 433.8L340.7 414.9M330.5 433.8L341.6 444.9M335.8 439.1L344.2 422.8M341.6 444.9L351.4 438.5M346.5 451.1L351.5 445.6M354.2 460.8L362.4 445.7M354.2 460.8L364.4 477.2M360.8 471.4L366.9 457.3M364.4 477.2L372.9 493.2M372.9 493.2L381.5 478.0M372.9 493.2L383.2 506.8M227.7 241.2L234.4 238.7M237.1 254.7L249.7 269.6M249.7 269.6L258.0 261.5M249.7 269.6L265.2 290.3M265.2 290.3L274.0 279.5M265.2 290.3L281.7 305.5M271.8 296.4L281.6 289.7M281.7 305.5L287.1 297.2M281.7 305.5L291.8 320.7M291.8 320.7L299.5 306.6M291.8 320.7L301.8 339.6M301.8 339.6L311.0 357.5M311.0 357.5L319.5 344.5M311.0 357.5L317.3 365.8M317.3 365.8L327.2 360.5M317.3 365.8L322.1 384.5M322.1 384.5L334.7 374.9M322.1 384.5L336.0 403.3M336.0 403.3L344.3 392.6M336.0 403.3L340.7 414.9M340.7 414.9L353.8 405.4M340.7 414.9L351.4 438.5M349.5 408.5L360.1 426.5M351.4 438.5L364.1 421.0M351.4 438.5L362.4 445.7M362.4 445.7L374.7 438.7M362.4 445.7L369.7 464.4M369.1 441.9L372.4 452.0M369.7 464.4L382.8 454.5M369.7 464.4L381.5 478.0M258.0 261.5L266.3 253.1M258.0 261.5L274.0 279.5M266.9 271.4L272.3 258.6M274.0 279.5L281.7 267.2M274.0 279.5L287.1 297.2M287.1 297.2L296.8 284.0M299.5 306.6L309.5 298.5M299.5 306.6L310.8 328.2M310.8 328.2L322.2 320.2M310.8 328.2L319.5 344.5M319.5 344.5L330.7 332.2M319.5 344.5L327.2 360.5M325.9 337.5L330.4 346.7M327.2 360.5L342.6 346.7M327.2 360.5L334.7 374.9M334.7 374.9L352.0 362.1M334.7 374.9L344.3 392.6M341.1 370.2L352.5 383.6M344.3 392.6L357.6 378.0M353.8 405.4L364.1 421.0M364.1 421.0L372.4 414.2M368.3 417.5L379.7 435.1M374.7 438.7L382.8 432.8M374.7 438.7L382.8 454.5M266.3 253.1L281.7 267.2M281.7 267.2L289.9 257.2M281.7 267.2L296.8 284.0M288.2 274.4L293.0 269.4M296.8 284.0L309.6 279.9M304.2 281.6L309.9 289.3M309.5 298.5L322.2 320.2M314.6 295.6L326.2 315.2M322.2 320.2L330.7 332.2M330.7 332.2L346.3 325.6M342.6 346.7L358.1 340.5M342.6 346.7L352.0 362.1M352.0 362.1L364.3 352.4M352.0 362.1L357.6 378.0M354.1 368.0L362.0 364.5M357.6 378.0L373.3 371.8M357.6 378.0L368.2 395.2M368.2 395.2L380.4 386.0M368.2 395.2L372.4 414.2M289.9 257.2L309.6 279.9M309.6 279.9L313.2 268.0M309.6 279.9L318.5 293.5M311.8 272.7L318.2 282.0M318.5 293.5L333.2 306.5M322.2 290.5L331.3 296.0M333.2 306.5L344.6 294.2M333.2 306.5L346.3 325.6M346.3 325.6L355.6 312.4M346.3 325.6L358.1 340.5M351.3 331.9L359.9 319.9M360.9 346.0L372.2 338.4M364.3 352.4L378.6 345.8M364.3 352.4L373.3 371.8M370.7 349.4L373.4 360.3M373.3 371.8L380.9 363.3M373.3 371.8L380.4 386.0M313.2 268.0L329.8 284.4M344.6 294.2L353.5 290.8M344.6 294.2L355.6 312.4M355.6 312.4L368.7 302.5M355.6 312.4L367.7 333.2M363.8 326.5L375.4 312.5M367.7 333.2L380.1 319.6M367.7 333.2L378.6 345.8M353.5 290.8L368.7 302.5M371.7 300.4L384.3 316.0" fill="none" stroke="#dedede" stroke-width="0.8"/>
<path d="M0.0 116.0L40.0 119.0L80.0 126.0L130.0 140.0L180.0 152.0L232.0 164.0L270.0 170.0L300.0 166.0L340.0 152.0L375.0 142.0M0.0 98.0L40.0 96.0L70.0 84.0L116.0 101.0L170.0 121.0L190.0 128.0L233.0 133.0L290.0 140.0L330.0 150.0M0.0 60.0L60.0 72.0L120.0 78.0L170.0 72.0L213.0 68.0L260.0 66.0L300.0 68.0L340.0 58.0L375.0 40.0M200.0 100.0L240.0 106.0L276.0 102.0L310.0 88.0L345.0 70.0L375.0 56.0M250.0 0.0L238.0 40.0L228.0 70.0L218.0 100.0L205.0 128.0L190.0 150.0M170.0 72.0L180.0 100.0L188.0 130.0L187.0 150.0M0.0 130.0L40.0 112.0L90.0 90.0L140.0 74.0L170.0 72.0M187.0 143.0L180.0 190.0L172.0 232.0L160.0 252.0L140.0 278.0L120.0 310.0L108.0 350.0L100.0 372.0L80.0 410.0L40.0 470.0L10.0 502.0M92.0 151.0L74.0 198.0L69.0 222.0L63.0 270.0L58.0 300.0L50.0 340.0L30.0 400.0L0.0 440.0M0.0 255.0L40.0 262.0L90.0 275.0L140.0 278.0M0.0 285.0L60.0 292.0L100.0 300.0L130.0 305.0M30.0 310.0L60.0 330.0L90.0 355.0L108.0 365.0M100.0 372.0L120.0 395.0L150.0 430.0L180.0 470.0L205.0 502.0M172.0 232.0L200.0 242.0L240.0 262.0L286.0 300.0L320.0 335.0L346.0 362.0L375.0 385.0M375.0 226.0L349.0 282.0L335.0 330.0L318.0 375.0L300.0 420.0L282.0 460.0L255.0 490.0L240.0 502.0M250.0 275.0L258.0 330.0L265.0 380.0L272.0 430.0L278.0 470.0M108.0 365.0L150.0 378.0L200.0 395.0L240.0 420.0L282.0 440.0M282.0 440.0L320.0 442.0L375.0 440.0M286.0 312.0L310.0 340.0L340.0 375.0L375.0 410.0M340.0 152.0L345.0 120.0L352.0 80.0L360.0 40.0L368.0 0.0M296.0 166.0L292.0 140.0L288.0 110.0M276.0 66.0L285.0 40.0L300.0 10.0M0.0 0.0L40.0 8.0L90.0 22.0L140.0 36.0L200.0 44.0M160.0 0.0L163.0 40.0L170.0 72.0M112.0 80.0L110.0 50.0L108.0 28.0M30.0 400.0L55.0 415.0L75.0 440.0L95.0 470.0M75.0 400.0L110.0 420.0L140.0 440.0M130.0 350.0L150.0 390.0L175.0 430.0L200.0 470.0L215.0 502.0M0.0 480.0L30.0 470.0L60.0 480.0L100.0 502.0M205.0 250.0L210.0 300.0L215.0 350.0L218.0 395.0M200.0 340.0L240.0 325.0L270.0 322.0L300.0 335.0M255.0 490.0L290.0 470.0L330.0 488.0L375.0 470.0" fill="none" stroke="#d3d3d3" stroke-width="0.95" stroke-linejoin="round"/>
<path d="M92 151L74 198M187 143L172 232M375 226L349 282M17.5 136L17.5 190" fill="none" stroke="#d6d6d6" stroke-width="2.4"/>
<path d="M92 151L74 198M187 143L172 232M375 226L349 282M17.5 136L17.5 190" fill="none" stroke="#f6f6f6" stroke-width="1.2"/>
<path d="M373.900 161.700L351.500 166.500L327.400 163.300L314.600 160.100L304.900 190.600L308.100 197L373.900 221.100M373.900 168.100L351.500 169.700L327.400 166.500L321 195.400L345 209.800L364.300 217.800L369.100 211.400L373.900 209.800M335.400 174.500L329 197L340.200 203.400L365.900 211.400L369.100 174.500ZM343.400 177.700L341 201.800L357.900 206.600L361.100 179.300Z" fill="none" stroke="#d8d8d8" stroke-width="0.9" stroke-linejoin="round"/>
<g fill="#939393" text-anchor="middle" stroke="#fff" stroke-width="1.2" paint-order="stroke" stroke-linejoin="round">
<text transform="translate(63.5 5.400000000000006) rotate(20)" font-size="7.6" dy="0.35em">resham St</text>
<text transform="translate(111.5 39.400000000000006) rotate(-82)" font-size="6.8" dy="0.35em">King St</text>
<text transform="translate(128.5 10.400000000000006) rotate(84)" font-size="7.4" dy="0.35em">ghall St</text>
<text transform="translate(156.5 3.4000000000000057) rotate(-82)" font-size="7.6" dy="0.35em">Moo</text>
<text transform="translate(116.5 100.4) rotate(19)" font-size="8.4" dy="0.35em">Cannon St</text>
<text transform="translate(91.5 125.4) rotate(12)" font-size="8.3" dy="0.35em">Upper Thames St</text>
<text transform="translate(221.5 22.400000000000006) rotate(-50)" font-size="7.2" dy="0.35em">Old Broad St</text>
<text transform="translate(234.5 50.400000000000006) rotate(-70)" font-size="8.8" dy="0.35em">A10</text>
<text transform="translate(219.5 98.4) rotate(-70)" font-size="8.8" dy="0.35em">A10</text>
<text transform="translate(213.5 67.4) rotate(-2)" font-size="6.8" dy="0.35em">Cornhill</text>
<text transform="translate(279.5 66.4) rotate(6)" font-size="8.0" dy="0.35em">Leadenhall St</text>
<text transform="translate(280.5 40.400000000000006) rotate(-62)" font-size="7.2" dy="0.35em">St Mary Axe</text>
<text transform="translate(276.5 102.4) rotate(-20)" font-size="8.3" dy="0.35em">Fenchurch St</text>
<text transform="translate(233.5 131.4) rotate(8)" font-size="7.0" dy="0.35em">Eastcheap</text>
<text transform="translate(287.5 143.4) rotate(-76)" font-size="7.2" dy="0.35em">Mark Ln</text>
<text transform="translate(320.5 129.4) rotate(-6)" font-size="6.9" dy="0.35em">Pepys St</text>
<text transform="translate(360.5 102.4) rotate(80)" font-size="7.2" dy="0.35em">Minories</text>
<text transform="translate(350.5 157.20000000000002) rotate(-14)" font-size="8.6" dy="0.35em">Tower Hill</text>
<text transform="translate(232.5 165.4) rotate(8)" font-size="8.0" dy="0.35em">Lower Thames St</text>
<text transform="translate(211.5 204.4) rotate(7)" font-size="8.0" dy="0.35em" font-style="italic" stroke="#f1f1f1">River Thames</text>
<text transform="translate(86.5 219.4) rotate(12)" font-size="7.2" dy="0.35em">Park St</text>
<text transform="translate(68.5 254.4) rotate(-83)" font-size="7.8" dy="0.35em">Southwark Bridge Rd</text>
<text transform="translate(27.5 258.4) rotate(15)" font-size="8.8" dy="0.35em">A3200</text>
<text transform="translate(187.5 242.4) rotate(10)" font-size="8.8" dy="0.35em">A200</text>
<text transform="translate(90.5 294.4) rotate(18)" font-size="7.2" dy="0.35em">Union St</text>
<text transform="translate(360.5 255.4) rotate(-68)" font-size="7.95" dy="0.35em">Tower Bridge Rd</text>
<text transform="translate(284.5 297.4) rotate(35)" font-size="7.9" dy="0.35em">Tooley St</text>
<text transform="translate(15.5 311.4) rotate(2)" font-size="7" dy="0.35em">perfield St</text>
<text transform="translate(75.5 334.4) rotate(40)" font-size="8.1" dy="0.35em">Marshalsea Rd</text>
<text transform="translate(113.5 322.4) rotate(-70)" font-size="8.8" dy="0.35em">A3</text>
<text transform="translate(104.5 362.4) rotate(60)" font-size="8.8" dy="0.35em">A2</text>
<text transform="translate(101.5 396.4) rotate(52)" font-size="7.2" dy="0.35em">Cole St</text>
<text transform="translate(120.5 421.4) rotate(35)" font-size="7.2" dy="0.35em">Trinity St</text>
<text transform="translate(58.5 419.4) rotate(52)" font-size="7.2" dy="0.35em">Harper Rd</text>
<text transform="translate(154.5 427.4) rotate(57)" font-size="7.2" dy="0.35em">Tabard St</text>
<text transform="translate(169.5 407.4) rotate(45)" font-size="7.2" dy="0.35em">Mancipie St</text>
<text transform="translate(184.5 367.4) rotate(-84)" font-size="6.8" dy="0.35em">Kipling St</text>
<text transform="translate(24.5 455.4) rotate(-48)" font-size="7.2" dy="0.35em">Tiverton St</text>
<text transform="translate(52.0 460.4) rotate(-41)" font-size="7.2" dy="0.35em">Bath Terrace</text>
<text transform="translate(143.5 484.4) rotate(60)" font-size="7" dy="0.35em">Deverell</text>
<text transform="translate(186.5 450.4) rotate(-45)" font-size="7" dy="0.35em">Law St</text>
<text transform="translate(230.5 332.4) rotate(-12)" font-size="7" dy="0.35em">Snowsfields</text>
<text transform="translate(273.5 330.4) rotate(15)" font-size="7" dy="0.35em">Crucifix Ln</text>
<text transform="translate(306.5 342.4) rotate(40)" font-size="7" dy="0.35em">Druid St</text>
<text transform="translate(357.5 335.4) rotate(38)" font-size="7" dy="0.35em">Queen Elizabe</text>
<text transform="translate(346.5 347.4) rotate(40)" font-size="7.9" dy="0.35em">Tooley St</text>
<text transform="translate(334.5 367.4) rotate(35)" font-size="8.8" dy="0.35em">A200</text>
<text transform="translate(363.5 392.4) rotate(40)" font-size="7" dy="0.35em">Druid St</text>
<text transform="translate(213.5 378.4) rotate(80)" font-size="6.8" dy="0.35em">Weston St</text>
<text transform="translate(195.5 394.4) rotate(30)" font-size="8.8" dy="0.35em">A2198</text>
<text transform="translate(270.5 395.4) rotate(80)" font-size="6.8" dy="0.35em">Bermondsey St</text>
<text transform="translate(303.5 412.4) rotate(-70)" font-size="7.95" dy="0.35em">Tower Bridge Rd</text>
<text transform="translate(322.5 423.4) rotate(-75)" font-size="6.8" dy="0.35em">Riley Rd</text>
<text transform="translate(352.5 422.4) rotate(80)" font-size="6.8" dy="0.35em">Maltby St</text>
<text transform="translate(316.5 440.4) rotate(-3)" font-size="8.0" dy="0.35em">Abbey St</text>
<text transform="translate(243.5 443.4) rotate(40)" font-size="7" dy="0.35em">Decima St</text>
<text transform="translate(283.5 472.4) rotate(25)" font-size="8.8" dy="0.35em">A2206</text>
<text transform="translate(253.5 475.4) rotate(-50)" font-size="8.0" dy="0.35em">Bridge Rd</text>
<text transform="translate(336.5 473.79999999999995) rotate(86)" font-size="7.1" dy="0.35em">The Grange</text>
</g>
<g fill="#adadad" text-anchor="middle" stroke="#fff" stroke-width="1.2" paint-order="stroke" font-weight="700">
<text x="158.500" y="64.600" font-size="9" letter-spacing="1.1">CITY OF</text>
<text x="158.500" y="74.900" font-size="9" letter-spacing="1.1">LONDON</text>
<text x="178" y="320.5" font-size="5.5" letter-spacing="0.75" font-weight="700" fill="#b2b2b2">SOUTHWARK</text>
<text x="-3.500" y="479.200" font-size="7.6" letter-spacing="1" font-weight="400" text-anchor="start" fill="#909090">ANT</text>
<text x="-2.700" y="487.600" font-size="7.6" letter-spacing="1" font-weight="400" text-anchor="start" fill="#909090">STLE</text>
</g>
<g fill="#a3a3a3" text-anchor="middle" stroke="#fff" stroke-width="1.4" paint-order="stroke">
<text x="105.500" y="162.800" font-size="8.3" stroke="#f1f1f1">River</text><text x="105.500" y="171.800" font-size="8.3" stroke="#f1f1f1">Walbrook</text>
<text x="316.500" y="287" font-size="8.6">Potters</text><text x="316.500" y="296.200" font-size="8.6">Fields Park</text>
</g>
<path d="M188.2 109.5C185.5 104.6 181 100.8 181 96.4a7.3 7.3 0 0 1 14.6 0c0 4.4-4.6 8.2-7.4 13.1z" fill="#222"/><circle cx="188.3" cy="96.4" r="2.7" fill="#fff"/>
<rect x="343.3" y="435.9" width="25" height="50" rx="1.5" fill="#fff"/><rect x="343.3" y="435.9" width="25" height="50" rx="1.5" fill="none" stroke="#e9e9e9" stroke-width="0.5"/><path d="M346.8 460.7h18.200" stroke="#e6e6e6" stroke-width="0.8"/><path d="M350.600 448.100h10.600M355.900 442.800v10.600M350.600 474.200h10.600" stroke="#666" stroke-width="1.4" fill="none"/>
<text x="6.300" y="496.300" font-size="10.8" font-weight="700" fill="#fff" stroke="#bcbcbc" stroke-width="1.3" paint-order="stroke" stroke-linejoin="round" textLength="35.4" lengthAdjust="spacingAndGlyphs">Google</text>
<rect x="80" y="492.600" width="295" height="9.400" fill="#fff" fill-opacity="0.7"/>
<g font-size="6.3" fill="#2a2a2a" lengthAdjust="spacingAndGlyphs">
<text x="82.9" y="498.900" textLength="54.6" lengthAdjust="spacingAndGlyphs">Keyboard shortcuts</text>
<text x="145.4" y="498.900" textLength="68.1" lengthAdjust="spacingAndGlyphs">Map data ©2025 Google</text>
<text x="221.7" y="498.900" textLength="17.2" lengthAdjust="spacingAndGlyphs">200 m</text>
<text x="294" y="498.900" textLength="16.5" lengthAdjust="spacingAndGlyphs">Terms</text>
<text x="318.8" y="498.900" textLength="52.3" lengthAdjust="spacingAndGlyphs">Report a map error</text>
</g><path d="M242.100 495.200v3.300h42.200v-3.300" fill="none" stroke="#2a2a2a" stroke-width="1"/>
</svg>
</div>
</body>
</html>
